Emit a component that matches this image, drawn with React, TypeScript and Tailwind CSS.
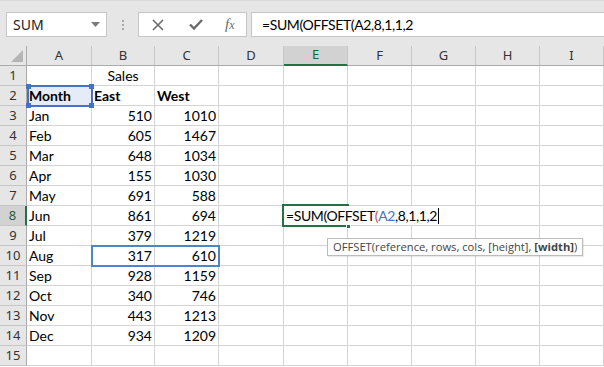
import React from "react";

const cols = ["A", "B", "C", "D", "E", "F", "G", "H", "I"];
const widths = [65, 63, 64, 65, 64, 64, 64, 64, 64];

type Cell = { t: string; align?: "l" | "r" | "c"; bold?: boolean };

const data: Record<number, Cell[]> = {
  1: [{ t: "" }, { t: "Sales", align: "c" }],
  2: [
    { t: "Month", bold: true },
    { t: "East", bold: true },
    { t: "West", bold: true },
  ],
};
const months: [string, number, number][] = [
  ["Jan", 510, 1010],
  ["Feb", 605, 1467],
  ["Mar", 648, 1034],
  ["Apr", 155, 1030],
  ["May", 691, 588],
  ["Jun", 861, 694],
  ["Jul", 379, 1219],
  ["Aug", 317, 610],
  ["Sep", 928, 1159],
  ["Oct", 340, 746],
  ["Nov", 443, 1213],
  ["Dec", 934, 1209],
];
months.forEach((m, i) => {
  data[i + 3] = [
    { t: m[0] },
    { t: String(m[1]), align: "r" },
    { t: String(m[2]), align: "r" },
  ];
});

const cellFont = { fontFamily: "Lato, 'Liberation Sans', sans-serif" };
const uiFont = { fontFamily: "'Noto Sans', 'Open Sans', sans-serif" };

export default function App() {
  const rows = Array.from({ length: 15 }, (_, i) => i + 1);
  return (
    <div className="w-[604px] h-[367px] overflow-hidden bg-white relative">
      {/* Formula bar area */}
      <div className="h-[46px] bg-[#e6e6e6] flex items-start pt-[11px] border-t border-[#dadada]">
        <div
          className="ml-[6px] w-[101px] h-[25px] bg-white border border-[#c6c6c6] flex items-center justify-between pl-[6px] pr-[6px] text-[14px] text-[#222]"
          style={uiFont}
        >
          <span>SUM</span>
          <svg width="9" height="5" viewBox="0 0 9 5">
            <path d="M0 0 L9 0 L4.5 5 Z" fill="#7a7a7a" />
          </svg>
        </div>
        <div className="w-[31px] h-[25px] flex flex-col items-center justify-center gap-[2px]">
          <div className="w-[2px] h-[2px] bg-[#a8a8a8]" />
          <div className="w-[2px] h-[2px] bg-[#a8a8a8]" />
          <div className="w-[2px] h-[2px] bg-[#a8a8a8]" />
        </div>
        <div className="w-[109px] h-[25px] bg-white border border-[#c6c6c6] flex items-center">
          <svg className="ml-[13px]" width="12" height="12" viewBox="0 0 12 12">
            <path d="M1 1 L11 11 M11 1 L1 11" stroke="#6b6b6b" strokeWidth="1.6" />
          </svg>
          <svg className="ml-[25px]" width="14" height="11" viewBox="0 0 14 11">
            <path d="M1 5.5 L5 9.5 L13 1" stroke="#6b6b6b" strokeWidth="2.4" fill="none" />
          </svg>
          <span
            className="ml-[22px] text-[15px] italic text-[#6b6b6b] leading-none"
            style={{ fontFamily: "'Liberation Serif', serif" }}
          >
            f<span className="text-[12px]">x</span>
          </span>
        </div>
        <div
          className="ml-[4px] flex-1 h-[25px] bg-white border-y border-l border-[#c6c6c6] flex items-center pl-[10px] text-[14px] tracking-[-0.4px] text-black"
          style={cellFont}
        >
          =SUM(OFFSET(A2,8,1,1,2
        </div>
      </div>

      {/* Grid */}
      <div
        className="grid"
        style={{
          gridTemplateColumns: `27px ${widths.map((w) => w + "px").join(" ")}`,
          gridTemplateRows: `20px repeat(15, 20px)`,
        }}
      >
        {/* corner */}
        <div className="bg-[#e6e6e6] border-r border-b border-[#ababab] relative">
          <svg className="absolute right-[3px] bottom-[3px]" width="12" height="12" viewBox="0 0 12 12">
            <path d="M12 0 L12 12 L0 12 Z" fill="#b5b5b5" />
          </svg>
        </div>
        {cols.map((c) => (
          <div
            key={c}
            className={
              c === "E"
                ? "bg-[#d2d2d2] border-r border-[#c6c6c6] border-b-2 border-b-[#217346] flex items-center justify-center text-[13px] text-[#1e5e3a]"
                : "bg-[#e6e6e6] border-r border-[#c6c6c6] border-b border-b-[#ababab] flex items-center justify-center text-[13px] text-[#333]"
            }
            style={uiFont}
          >
            {c}
          </div>
        ))}
        {rows.map((r) => (
          <React.Fragment key={r}>
            <div
              className={
                r === 8
                  ? "bg-[#d2d2d2] border-r-2 border-r-[#217346] border-b border-b-[#c6c6c6] flex items-center justify-center text-[13px] text-[#1e5e3a]"
                  : "bg-[#e6e6e6] border-r border-r-[#ababab] border-b border-b-[#c6c6c6] flex items-center justify-center text-[13px] text-[#333]"
              }
              style={uiFont}
            >
              {r}
            </div>
            {cols.map((c, ci) => {
              const cell = data[r]?.[ci];
              const align =
                cell?.align === "r"
                  ? "justify-end pr-[2px]"
                  : cell?.align === "c"
                  ? "justify-center"
                  : "justify-start pl-[2px]";
              return (
                <div
                  key={c}
                  className={`border-r border-b border-[#d4d4d4] flex items-end leading-[18px] text-[14px] text-black whitespace-nowrap overflow-visible ${align} ${
                    cell?.bold ? "font-bold" : ""
                  } ${r === 2 && c === "A" ? "bg-[#e6ecf7]" : ""}`}
                  style={cellFont}
                >
                  {cell?.t}
                </div>
              );
            })}
          </React.Fragment>
        ))}
      </div>

      {/* A2 reference highlight */}
      <div className="absolute left-[27px] top-[85px] w-[66px] h-[22px] border-2 border-[#4472c4] pointer-events-none">
        <div className="absolute -left-[3px] -top-[3px] w-[5px] h-[5px] bg-[#4472c4]" />
        <div className="absolute -right-[3px] -top-[3px] w-[5px] h-[5px] bg-[#4472c4]" />
        <div className="absolute -left-[3px] -bottom-[3px] w-[5px] h-[5px] bg-[#4472c4]" />
        <div className="absolute -right-[3px] -bottom-[3px] w-[5px] h-[5px] bg-[#4472c4]" />
      </div>

      {/* B10:C10 highlight */}
      <div className="absolute left-[91px] top-[245px] w-[129px] h-[22px] border-2 border-[#4a86c8] pointer-events-none" />

      {/* Active cell E8 */}
      <div className="absolute left-[282px] top-[204px] w-[67px] h-[23px] border-2 border-[#217346] pointer-events-none">
        <div className="absolute -right-[4px] -bottom-[4px] w-[5px] h-[5px] bg-[#217346] border border-white" />
      </div>
      {/* editing text, drawn over the cell */}
      <div
        className="absolute left-[284px] top-[206px] h-[19px] pr-[2px] bg-white flex items-end leading-[18px] pl-[2px] text-[14px] tracking-[-0.4px] text-black whitespace-nowrap"
        style={cellFont}
      >
        <span>=SUM(OFFSET</span>
        <span className="text-[#c0504d]">(</span>
        <span className="text-[#4472c4]">A2</span>
        <span>,8,1,1,2</span>
        <span className="w-[1px] h-[16px] bg-black ml-[1px] mb-[1px]" />
      </div>

      {/* Tooltip */}
      <div
        className="absolute left-[327px] top-[238px] h-[18px] px-[5px] bg-white border border-[#bcbcbc] flex items-center text-[11.2px] text-[#444] whitespace-nowrap shadow-[1px_1px_1px_rgba(0,0,0,0.08)]"
        style={{ fontFamily: "'Open Sans', 'Noto Sans', sans-serif" }}
      >
        OFFSET(reference, rows, cols, [height],&nbsp;<span className="font-bold">[width]</span>)
      </div>
    </div>
  );
}
